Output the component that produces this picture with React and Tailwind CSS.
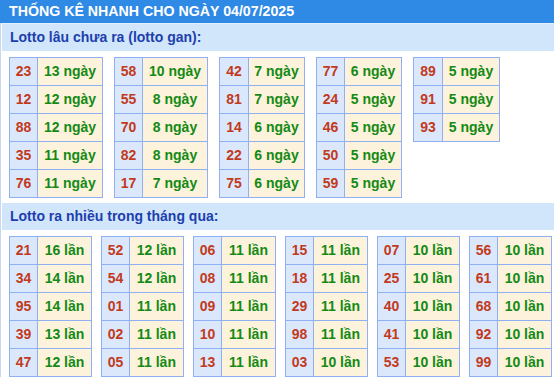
import React from "react";

const gan = [
  { w1: "w-[28px]", w2: "w-[65px]", rows: [["23", "13"], ["12", "12"], ["88", "12"], ["35", "11"], ["76", "11"]] },
  { w1: "w-[28px]", w2: "w-[65px]", rows: [["58", "10"], ["55", "8"], ["70", "8"], ["82", "8"], ["17", "7"]] },
  { w1: "w-[29px]", w2: "w-[56px]", rows: [["42", "7"], ["81", "7"], ["14", "6"], ["22", "6"], ["75", "6"]] },
  { w1: "w-[28px]", w2: "w-[57px]", rows: [["77", "6"], ["24", "5"], ["46", "5"], ["50", "5"], ["59", "5"]] },
  { w1: "w-[29px]", w2: "w-[57px]", rows: [["89", "5"], ["91", "5"], ["93", "5"]] },
];

const nhieu = [
  [["21", "16"], ["34", "14"], ["95", "14"], ["39", "13"], ["47", "12"]],
  [["52", "12"], ["54", "12"], ["01", "11"], ["02", "11"], ["05", "11"]],
  [["06", "11"], ["08", "11"], ["09", "11"], ["10", "11"], ["13", "11"]],
  [["15", "11"], ["18", "11"], ["29", "11"], ["98", "11"], ["03", "10"]],
  [["07", "10"], ["25", "10"], ["40", "10"], ["41", "10"], ["53", "10"]],
  [["56", "10"], ["61", "10"], ["68", "10"], ["92", "10"], ["99", "10"]],
];

function Table({ rows, w1, w2, unit }) {
  return (
    <div className="self-start border-l border-t border-[#8fb0f2]">
      {rows.map(([a, b], i) => (
        <div key={i} className="flex h-[28px]">
          <div
            className={`${w1} flex items-center justify-center border-b border-r border-[#8fb0f2] bg-[#dbe8fc] text-[14px] font-bold text-[#c23a1c]`}
          >
            {a}
          </div>
          <div
            className={`${w2} flex items-center justify-center border-b border-r border-[#8fb0f2] bg-[#fdf2dc] text-[14px] font-bold text-[#148a14]`}
          >
            {b} {unit}
          </div>
        </div>
      ))}
    </div>
  );
}

function Band({ children }) {
  return (
    <div className="ml-[1px] flex h-[27px] items-center bg-[#d2e6fb] pl-[8px] text-[14px] font-bold text-[#1c3fae]">
      {children}
    </div>
  );
}

export default function App() {
  return (
    <div
      className="h-[378px] w-[554px] overflow-hidden bg-white"
      style={{ fontFamily: '"Liberation Sans", Arial, sans-serif' }}
    >
      <div className="flex h-[23px] items-center bg-[#2f8ae6] pl-[9px] text-[14.2px] font-bold text-white">
        THỐNG KÊ NHANH CHO NGÀY 04/07/2025
      </div>
      <div className="border-l border-[#c9d8ef]">
        <div className="h-px bg-[#e4effc]" />
        <Band>Lotto lâu chưa ra (lotto gan):</Band>
        <div className="flex h-[152px] gap-[11px] pl-[8px] pt-[6px]">
          {gan.map((t, i) => (
            <Table key={i} rows={t.rows} w1={t.w1} w2={t.w2} unit="ngày" />
          ))}
        </div>
        <Band>Lotto ra nhiều trong tháng qua:</Band>
        <div className="flex gap-[9px] pl-[8px] pt-[6px]">
          {nhieu.map((rows, i) => (
            <Table key={i} rows={rows} w1="w-[28px]" w2="w-[54px]" unit="lần" />
          ))}
        </div>
      </div>
    </div>
  );
}
